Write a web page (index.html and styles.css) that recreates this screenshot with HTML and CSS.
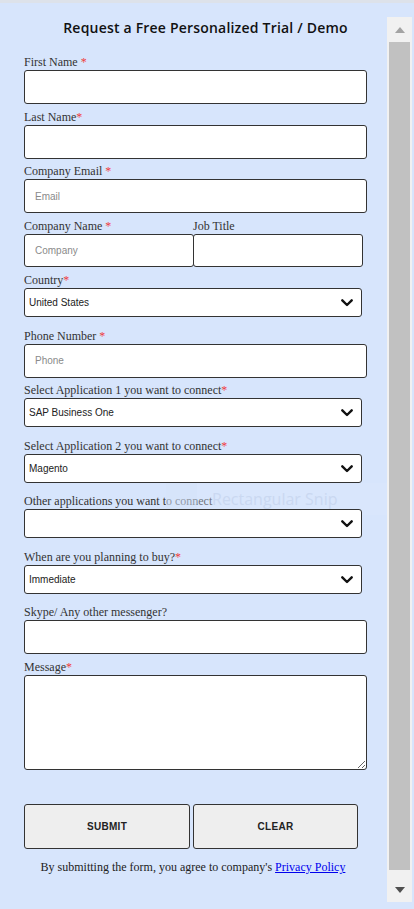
FILE: index.html
```html
<!DOCTYPE html>
<html lang="en">
<head>
<meta charset="utf-8">
<title>Request a Free Personalized Trial / Demo</title>
<link rel="stylesheet" href="styles.css">
</head>
<body>
<div class="topbar"></div>
<div class="page">
  <form class="form">
    <h1 class="title">Request a Free Personalized Trial / Demo</h1>

    <label class="lbl">First Name <span class="req">*</span></label>
    <input class="txt" type="text">

    <label class="lbl">Last Name<span class="req">*</span></label>
    <input class="txt" type="text">

    <label class="lbl">Company Email <span class="req">*</span></label>
    <input class="txt" type="text" placeholder="Email">

    <div class="split">
      <div class="col">
        <label class="lbl">Company Name <span class="req">*</span></label>
        <input class="txt half first" type="text" placeholder="Company">
      </div>
      <div class="col">
        <label class="lbl">Job Title</label>
        <input class="txt half" type="text">
      </div>
    </div>

    <label class="lbl">Country<span class="req">*</span></label>
    <div class="selwrap">
      <select class="sel"><option>United States</option></select>
      <svg class="chev" viewBox="0 0 12 8" width="12" height="8"><path d="M1.3 1.3 L6 6 L10.7 1.3" fill="none" stroke="#111" stroke-width="2.4" stroke-linecap="round" stroke-linejoin="round"/></svg>
    </div>

    <label class="lbl">Phone Number <span class="req">*</span></label>
    <input class="txt" type="text" placeholder="Phone">

    <label class="lbl">Select Application 1 you want to connect<span class="req">*</span></label>
    <div class="selwrap">
      <select class="sel"><option>SAP Business One</option></select>
      <svg class="chev" viewBox="0 0 12 8" width="12" height="8"><path d="M1.3 1.3 L6 6 L10.7 1.3" fill="none" stroke="#111" stroke-width="2.4" stroke-linecap="round" stroke-linejoin="round"/></svg>
    </div>

    <label class="lbl">Select Application 2 you want to connect<span class="req">*</span></label>
    <div class="selwrap">
      <select class="sel"><option>Magento</option></select>
      <svg class="chev" viewBox="0 0 12 8" width="12" height="8"><path d="M1.3 1.3 L6 6 L10.7 1.3" fill="none" stroke="#111" stroke-width="2.4" stroke-linecap="round" stroke-linejoin="round"/></svg>
    </div>

    <label class="lbl">Other applications you want to connect</label>
    <div class="selwrap">
      <select class="sel"><option></option></select>
      <svg class="chev" viewBox="0 0 12 8" width="12" height="8"><path d="M1.3 1.3 L6 6 L10.7 1.3" fill="none" stroke="#111" stroke-width="2.4" stroke-linecap="round" stroke-linejoin="round"/></svg>
      <div class="snip"><span class="snip-icon"></span><span class="snip-text">Rectangular Snip</span></div>
    </div>

    <label class="lbl">When are you planning to buy?<span class="req">*</span></label>
    <div class="selwrap">
      <select class="sel"><option>Immediate</option></select>
      <svg class="chev" viewBox="0 0 12 8" width="12" height="8"><path d="M1.3 1.3 L6 6 L10.7 1.3" fill="none" stroke="#111" stroke-width="2.4" stroke-linecap="round" stroke-linejoin="round"/></svg>
    </div>

    <label class="lbl">Skype/ Any other messenger?</label>
    <input class="txt" type="text">

    <label class="lbl">Message<span class="req">*</span></label>
    <textarea class="msg"></textarea>

    <div class="buttons">
      <button type="button" class="btn submit">SUBMIT</button>
      <button type="button" class="btn clear">CLEAR</button>
    </div>

    <p class="terms">By submitting the form, you agree to company's <a href="#">Privacy Policy</a></p>
  </form>

  <div class="scrollbar">
    <div class="sb-btn">
      <svg viewBox="0 0 10 6" width="10" height="6"><path d="M0 6 L5 0 L10 6 Z" fill="#a3a3a3"/></svg>
    </div>
    <div class="sb-thumb"></div>
    <div class="sb-btn">
      <svg viewBox="0 0 10 6" width="10" height="6"><path d="M0 0 L10 0 L5 6 Z" fill="#505050"/></svg>
    </div>
  </div>
</div>
</body>
</html>
```

FILE: styles.css
```css
html, body {
  margin: 0;
  padding: 0;
}

body {
  background: #d7e5fc;
  font-family: "Liberation Serif", "Times New Roman", serif;
  color: #333;
  height: 909px;
  overflow: hidden;
}

.topbar {
  height: 3px;
  background: #dde2ea;
}

.page {
  display: flex;
  align-items: flex-start;
  padding-left: 24px;
}

.form {
  width: 363px;
  display: flex;
  flex-direction: column;
  align-items: flex-start;
}

.title {
  width: 363px;
  margin: 15px 0 18px;
  font-family: "Open Sans", "Liberation Sans", sans-serif;
  font-weight: 600;
  font-size: 14px;
  line-height: 19px;
  letter-spacing: 0.2px;
  text-align: center;
  color: #111;
}

.lbl {
  display: block;
  font-size: 12px;
  line-height: 15px;
  height: 15px;
  color: #333;
  white-space: nowrap;
}

.req {
  color: #f03a3a;
}

.txt {
  box-sizing: border-box;
  width: 343px;
  height: 34px;
  margin: 0 0 5.5px;
  padding: 0 10px;
  border: 1px solid #333;
  border-radius: 3px;
  background: #fff;
  font-family: "Liberation Sans", Arial, sans-serif;
  font-size: 10px;
  color: #222;
  outline: none;
}

.txt::placeholder {
  color: #8a8a8a;
}

.split {
  display: grid;
  grid-template-columns: 169px 170px;
  margin-bottom: 6.5px;
}

.col {
  display: flex;
  flex-direction: column;
}

.txt.half {
  width: 170px;
  height: 33px;
  margin: 0;
}

.selwrap {
  position: relative;
  width: 338px;
  height: 29px;
  margin-bottom: 11.5px;
}

.sel {
  position: relative;
  z-index: 1;
  box-sizing: border-box;
  width: 338px;
  height: 29px;
  padding: 0 4px;
  border: 1px solid #333;
  border-radius: 3px;
  background: #fff;
  font-family: "Liberation Sans", Arial, sans-serif;
  font-size: 10px;
  color: #222;
  appearance: none;
  -webkit-appearance: none;
  outline: none;
}

.chev {
  position: absolute;
  z-index: 2;
  right: 9px;
  top: 11px;
  pointer-events: none;
}

.snip {
  position: absolute;
  z-index: 0;
  left: 142px;
  top: -26px;
  width: 221px;
  height: 32px;
  display: flex;
  align-items: center;
  background: rgba(222, 233, 253, 0.35);
  pointer-events: none;
}

.snip-icon {
  width: 31px;
  height: 32px;
  background: rgba(210, 223, 245, 0.35);
}

.snip-text {
  margin-left: 15px;
  font-family: "Open Sans", "Liberation Sans", sans-serif;
  font-size: 16px;
  color: #cad8f1;
}

.msg {
  box-sizing: border-box;
  width: 343px;
  height: 95px;
  margin: 0;
  border: 1px solid #333;
  border-radius: 3px;
  background: #fff;
  outline: none;
  display: block;
}

.buttons {
  display: flex;
  gap: 3px;
  margin-top: 34px;
}

.btn {
  box-sizing: border-box;
  height: 45px;
  border: 1px solid #333;
  border-radius: 3px;
  background: #eeeeee;
  font-family: "Liberation Sans", Arial, sans-serif;
  font-weight: bold;
  font-size: 10px;
  letter-spacing: 0.3px;
  color: #222;
  padding: 0;
}

.submit { width: 166px; }
.clear { width: 165px; }

.terms {
  width: 338px;
  margin: 11.5px 0 0;
  font-size: 12px;
  line-height: 15px;
  text-align: center;
  color: #222;
}

.terms a {
  color: #0000ee;
  text-decoration: underline;
}

.scrollbar {
  box-sizing: border-box;
  width: 25px;
  height: 885px;
  margin-top: 14px;
  background: #f1f1f1;
  padding: 0 2px;
  display: flex;
  flex-direction: column;
}

.sb-btn {
  height: 25px;
  display: flex;
  align-items: center;
  justify-content: center;
  flex: none;
}

.sb-thumb {
  flex: 1;
  background: #c1c1c1;
  margin-bottom: 7px;
}
```
